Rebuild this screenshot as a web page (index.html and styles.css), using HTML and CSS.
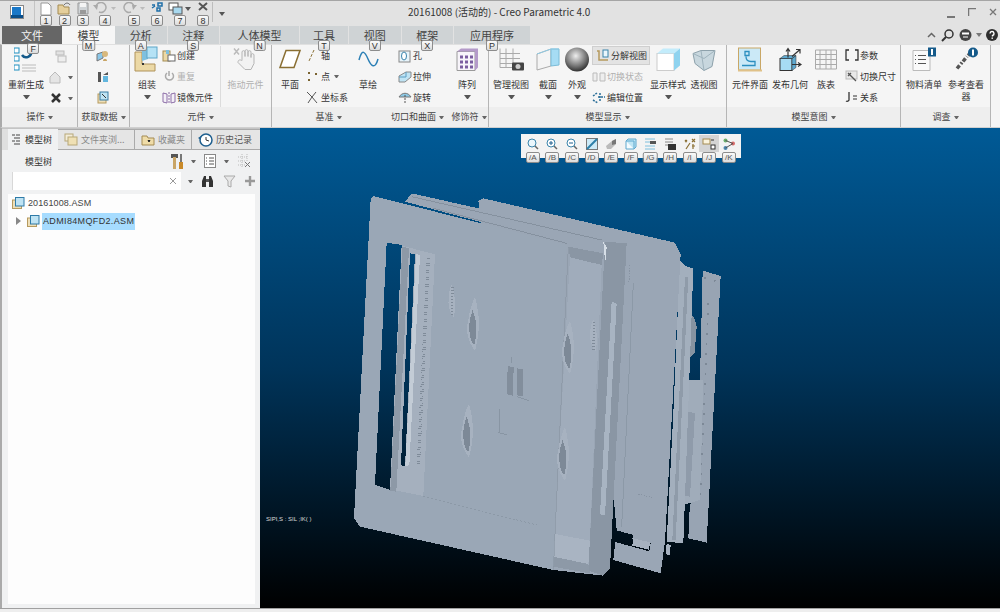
FILE: index.html
```html
<!DOCTYPE html>
<html lang="zh">
<head>
<meta charset="utf-8">
<title>20161008 (活动的) - Creo Parametric 4.0</title>
<link rel="stylesheet" href="styles.css">
</head>
<body>
<div class="app">
  <header class="titlebar">
    <div class="appicon"><svg width="12" height="12" viewBox="0 0 12 12"><rect x="1" y="1" width="9" height="9" fill="#1a78c8"/><rect x="0" y="9" width="12" height="3" fill="#0b4f8a"/></svg></div>
    <div class="qa">
      <div class="qb w18"><svg width="12" height="14" viewBox="0 0 12 14"><path d="M1 1h7l3 3v9H1z" fill="#fff" stroke="#999"/></svg><span class="kt">1</span></div>
      <div class="qb w19"><svg width="16" height="13" viewBox="0 0 16 13"><path d="M1 12V3h5l1 2h5v7z" fill="#e5cf9c" stroke="#a48b52"/><path d="M7 3c2-3 5-2 6 0" fill="none" stroke="#666"/></svg><span class="kt">2</span></div>
      <div class="qb w17"><svg width="12" height="13" viewBox="0 0 12 13"><path d="M1 1h10v11H1z" fill="#cfd3d6" stroke="#999"/><rect x="3" y="1" width="6" height="4" fill="#f4f4f4"/><rect x="3" y="8" width="6" height="4" fill="#999"/></svg><span class="kt">3</span></div>
      <div class="qb w28"><svg width="24" height="12" viewBox="0 0 24 12"><path d="M3 5a5 5 0 1 1 3 5" fill="none" stroke="#aaa" stroke-width="1.5"/><path d="M0 3l5 0-1 5z" fill="#aaa"/><path d="M18 5h5l-2.500 3z" fill="#bbb"/></svg><span class="kt">4</span></div>
      <div class="qb w30"><svg width="24" height="12" viewBox="0 0 24 12"><path d="M12 5a5 5 0 1 0-3 5" fill="none" stroke="#aaa" stroke-width="1.5"/><path d="M15 3l-5 0 1 5z" fill="#aaa"/><path d="M18 5h5l-2.500 3z" fill="#bbb"/></svg><span class="kt">5</span></div>
      <div class="qb w16"><svg width="12" height="10" viewBox="0 0 12 10"><path d="M1 6l3-2M1 3h3M7 1h4v3H7zM6 6h3v3H6z" fill="none" stroke="#1f6fa8" stroke-width="1.500"/></svg><span class="kt">6</span></div>
      <div class="qb w30"><svg width="24" height="14" viewBox="0 0 24 14"><rect x="1" y="1" width="9" height="7" fill="#fff" stroke="#555"/><rect x="5" y="5" width="9" height="7" fill="#a8d8ee" stroke="#555"/><path d="M17 5h6l-3 4z" fill="#555"/></svg><span class="kt">7</span></div>
      <div class="qb w16"><svg width="10" height="9" viewBox="0 0 10 9"><path d="M1 1l8 7M9 1L1 8" stroke="#555" stroke-width="2"/></svg><span class="kt">8</span></div>
    </div>
    <div class="qa-menu"><span class="bar"></span><span class="ar"></span></div>
    <div class="wintitle">20161008 (活动的) - Creo Parametric 4.0</div>
    <div class="winbtns">
      <svg width="8" height="10" viewBox="0 0 8 10"><rect y="8" width="8" height="2" fill="#777"/></svg>
      <svg width="8" height="8" viewBox="0 0 8 8"><path d="M.5 8V.5H8" fill="none" stroke="#777" stroke-width="1.500"/></svg>
      <svg width="8" height="8" viewBox="0 0 8 8"><path d="M1 1l6 6M7 1L1 7" stroke="#777" stroke-width="1.300"/></svg>
    </div>
  </header>

  <nav class="tabs">
    <div class="tab t-file">文件<span class="kt">F</span></div>
    <div class="tab t-on">模型<span class="kt">M</span></div>
    <div class="tab t52">分析<span class="kt">A</span></div>
    <div class="tab t52">注释<span class="kt">S</span></div>
    <div class="tab t80">人体模型<span class="kt">N</span></div>
    <div class="tab t49">工具<span class="kt">T</span></div>
    <div class="tab t52">视图<span class="kt">V</span></div>
    <div class="tab t52">框架<span class="kt">X</span></div>
    <div class="tab t76">应用程序<span class="kt">P</span></div>
    <div class="help">
      <svg width="9" height="6" viewBox="0 0 9 6"><path d="M1 5l3.500-3.500L8 5" fill="none" stroke="#666" stroke-width="1.500"/></svg>
      <svg width="13" height="13" viewBox="0 0 13 13"><circle cx="8" cy="5" r="4" fill="none" stroke="#333" stroke-width="1.500"/><path d="M5 8l-4 4" stroke="#333" stroke-width="2"/></svg>
      <svg width="13" height="12" viewBox="0 0 13 12"><circle cx="6.500" cy="6" r="6" fill="#444"/><rect x="3" y="3.500" width="7" height="2" fill="#fff"/><path d="M4 8h5" stroke="#fff"/></svg>
      <svg class="tight" width="6" height="4" viewBox="0 0 6 4"><path d="M0 0h6L3 4z" fill="#777"/></svg>
      <svg width="12" height="12" viewBox="0 0 12 12"><circle cx="6" cy="6" r="6" fill="#2e2e2e"/><path d="M4 4.500a2 2 0 1 1 2.500 2v1" fill="none" stroke="#fff" stroke-width="1.400"/><rect x="5.500" y="8.500" width="1.400" height="1.400" fill="#fff"/></svg>
    </div>
  </nav>

  <section class="ribbon">
    <div class="grp g75 bd">
      <div class="gb">
        <div class="big b44">
          <svg class="i" width="24" height="25" viewBox="0 0 24 25"><rect x="0" y="1" width="5" height="5" fill="#fff" stroke="#1f8fc0"/><rect x="0" y="9" width="5" height="5" fill="#fff" stroke="#1f8fc0"/><rect x="0" y="18" width="5" height="5" fill="#fff" stroke="#1f8fc0"/><path d="M8 8a5 5 0 0 0 9-4" fill="none" stroke="#155a8a" stroke-width="2.500"/><path d="M8 18h14M8 21h14M8 24h14" stroke="#bbb"/></svg>
          <span class="lb">重新生成</span><span class="ar"></span>
        </div>
        <div class="col c26 icons">
          <svg width="12" height="13" viewBox="0 0 12 13"><rect x="1" y="1" width="8" height="4" fill="#e2e2e2" stroke="#bbb"/><rect x="3" y="6" width="8" height="6" fill="#eee" stroke="#bbb"/></svg>
          <div class="row"><svg width="13" height="13" viewBox="0 0 13 13"><path d="M1 6l5-5 5 5v6H1z" fill="#e5e5e5" stroke="#bbb"/></svg><span class="ar ar-s"></span></div>
          <div class="row"><svg width="12" height="12" viewBox="0 0 12 12"><path d="M2 2l8 8M10 2l-8 8" stroke="#333" stroke-width="2.500"/></svg><span class="ar ar-s"></span></div>
        </div>
      </div>
      <div class="gl">操作<span class="ar ar-s"></span></div>
    </div>

    <div class="grp g51 bd">
      <div class="gb">
        <div class="col c51 icons">
          <svg width="13" height="12" viewBox="0 0 13 12"><path d="M1 4l6-2v6l-6 3z" fill="#8cc7e8" stroke="#777"/><circle cx="9" cy="4" r="3" fill="#d8b87c"/><path d="M7 11c0-3 4-3 4 0z" fill="#c9a566"/></svg>
          <svg width="12" height="12" viewBox="0 0 12 12"><rect x="1" y="1" width="3" height="10" fill="#555"/><path d="M6 4l5-3v3z" fill="#555"/><rect x="6" y="5" width="5" height="6" fill="#62b6de"/></svg>
          <svg width="12" height="13" viewBox="0 0 12 13"><rect x="1" y="3" width="8" height="9" fill="#eedfb8" stroke="#b69a5e"/><rect x="3" y="1" width="8" height="8" fill="#bfe3f3" stroke="#3a7da3"/><path d="M5 3l4 4" stroke="#333"/></svg>
        </div>
      </div>
      <div class="gl">获取数据<span class="ar ar-s"></span></div>
    </div>

    <div class="grp g141 bd">
      <div class="gb">
        <div class="big b30">
          <svg class="i" width="26" height="27" viewBox="0 0 26 27"><path d="M1 6h7v12h13v7H1z" fill="#ecd9a6" stroke="#b0935a"/><path d="M8 3l6-2v12l-6 2z" fill="#7fc0de"/><rect x="13" y="1" width="10" height="11" fill="#b5e2f5" stroke="#5ea6c8"/><rect x="8" y="17" width="2" height="2" fill="#333"/></svg>
          <span class="lb">组装</span><span class="ar"></span>
        </div>
        <div class="col c58 start">
          <div class="sm"><svg width="14" height="13" viewBox="0 0 14 13"><rect x="1" y="2" width="7" height="10" fill="#ecd9a6" stroke="#a48b52"/><rect x="6" y="6" width="7" height="6" fill="#fff" stroke="#666"/><path d="M4 1h3v4H4z" fill="#7fc0de"/></svg>创建</div>
          <div class="sm dim"><svg width="14" height="13" viewBox="0 0 14 13"><path d="M5 3a4 4 0 1 0 5 0M7 1v5" fill="none" stroke="#aaa" stroke-width="1.500"/></svg>重复</div>
          <div class="sm"><svg width="14" height="13" viewBox="0 0 14 13"><path d="M1 2l4 1v9l-4-1zM13 2l-4 1v9l4-1z" fill="#f4f0f7" stroke="#8d6fa8"/><path d="M7 1v11" stroke="#8d6fa8" stroke-dasharray="2 1"/></svg>镜像元件</div>
        </div>
        <div class="big b48 sep dim">
          <svg class="i" width="26" height="24" viewBox="0 0 26 24"><path d="M1 1l5 6M6 1L1 7" stroke="#bbb" stroke-width="1.500"/><path d="M9 12V4a2 2 0 0 1 3 0v5-6a2 2 0 0 1 3 0v6-5a2 2 0 0 1 3 0v6-3a2 2 0 0 1 3 0v9l-3 6H12l-7-7c0-3 2-3 4-2z" fill="#f2f2f2" stroke="#b5b5b5"/></svg>
          <span class="lb">拖动元件</span>
        </div>
      </div>
      <div class="gl">元件<span class="ar ar-s"></span></div>
    </div>

    <div class="grp g113">
      <div class="gb">
        <div class="big b32">
          <svg class="i" width="22" height="20" viewBox="0 0 22 20"><path d="M7 1h14l-6 17H1z" fill="#fff" stroke="#8a6f33" stroke-width="1.500"/></svg>
          <span class="lb">平面</span>
        </div>
        <div class="col c48 start">
          <div class="sm"><svg width="14" height="13" viewBox="0 0 14 13"><path d="M8 1L3 12" stroke="#8a6f33" stroke-dasharray="3 1.500"/></svg>轴</div>
          <div class="sm"><svg width="14" height="13" viewBox="0 0 14 13"><path d="M2 3l3 0M2 10l3 0M9 4h3" stroke="#7a6330" stroke-width="2" stroke-dasharray="2 1"/></svg>点<span class="ar ar-s"></span></div>
          <div class="sm"><svg width="14" height="13" viewBox="0 0 14 13"><path d="M1 1l5 5-4 6M6 6l4-5M6 6l5 6" fill="none" stroke="#555"/></svg>坐标系</div>
        </div>
        <div class="big b30">
          <svg class="i" width="21" height="17" viewBox="0 0 21 17"><path d="M1 9C4-3 7 1 10 8s7 11 10 0" fill="none" stroke="#2b7fb5" stroke-width="1.500"/></svg>
          <span class="lb">草绘</span>
        </div>
      </div>
      <div class="gl">基准<span class="ar ar-s"></span></div>
    </div>

    <div class="grp g64">
      <div class="gb">
        <div class="col c64 start">
          <div class="sm"><svg width="14" height="14" viewBox="0 0 14 14"><rect x="1" y="2" width="11" height="11" fill="#e8f4fa" stroke="#888"/><ellipse cx="6" cy="7" rx="2.500" ry="4" fill="#fff" stroke="#3a84ab"/></svg>孔</div>
          <div class="sm"><svg width="14" height="14" viewBox="0 0 14 14"><path d="M1 6l7-4h5v5l-6 5H1z" fill="#bfe3f3" stroke="#888"/><path d="M8 2v5l-7 0" fill="none" stroke="#5a9dc2"/></svg>拉伸</div>
          <div class="sm"><svg width="14" height="14" viewBox="0 0 14 14"><path d="M1 6c3-5 9-5 12 0z" fill="#8cc9e6" stroke="#777"/><path d="M7 4v9" stroke="#555" stroke-dasharray="2 1"/></svg>旋转</div>
        </div>
      </div>
      <div class="gl">切口和曲面<span class="ar ar-s"></span></div>
    </div>

    <div class="grp g39 bd">
      <div class="gb">
        <div class="big b30">
          <svg class="i" width="23" height="24" viewBox="0 0 23 24"><path d="M1 4h18v19H1z" fill="#f7f4fa" stroke="#9a9a9a"/><path d="M1 4l4-3h17l-3 3zM19 4l3-3v19l-3 3z" fill="#b49ac9"/><path d="M4 8h3v3H4zM9 8h3v3H9zM14 8h3v3h-3zM4 13h3v3H4zM9 13h3v3H9zM14 13h3v3h-3zM4 18h3v3H4zM9 18h3v3H9zM14 18h3v3h-3z" fill="#7b5da0"/></svg>
          <span class="lb">阵列</span><span class="ar"></span>
        </div>
      </div>
      <div class="gl">修饰符<span class="ar ar-s"></span></div>
    </div>

    <div class="grp g238 bd">
      <div class="gb">
        <div class="big b40">
          <svg class="i" width="25" height="24" viewBox="0 0 25 24"><path d="M1 1v19h19M1 6h20M1 11h20M1 16h20M7 1v19M14 1v19" fill="none" stroke="#aaa"/><rect x="13" y="15" width="12" height="8" rx="1" fill="#444"/><circle cx="19" cy="19" r="2.500" fill="#ccc"/></svg>
          <span class="lb">管理视图</span><span class="ar"></span>
        </div>
        <div class="big b34">
          <svg class="i" width="24" height="23" viewBox="0 0 24 23"><path d="M1 6l14-5v17L1 22z" fill="#f4f4f4" stroke="#aaa"/><path d="M15 1h8v16l-8 1z" fill="#a6dcf4" stroke="#7bbcd8"/><path d="M1 6l14-5h8" fill="none" stroke="#8fcbe5"/></svg>
          <span class="lb">截面</span><span class="ar"></span>
        </div>
        <div class="big b24">
          <svg class="i" width="24" height="24" viewBox="0 0 24 24"><defs><radialGradient id="ball" cx=".45" cy=".35" r=".7"><stop offset="0" stop-color="#eee"/><stop offset=".6" stop-color="#777"/><stop offset="1" stop-color="#222"/></radialGradient></defs><circle cx="12" cy="12" r="12" fill="url(#ball)"/></svg>
          <span class="lb">外观</span><span class="ar"></span>
        </div>
        <div class="col c60 start mid">
          <div class="sm on"><svg width="14" height="13" viewBox="0 0 14 13"><path d="M1 2h2v9h9" fill="none" stroke="#b69a5e" stroke-width="1.500"/><rect x="7" y="1" width="5" height="7" fill="#eaf6fc" stroke="#3a84ab"/></svg>分解视图</div>
          <div class="sm dim"><svg width="14" height="13" viewBox="0 0 14 13"><path d="M1 3h4v8H1zM8 3h5v8H8z" fill="#eee" stroke="#bbb"/></svg>切换状态</div>
          <div class="sm"><svg width="14" height="13" viewBox="0 0 14 13"><path d="M1 5l4-3M1 9l5 3M8 2v9M6 6h7" stroke="#2b6f99" stroke-width="1.500" stroke-dasharray="2 1" fill="none"/></svg>编辑位置</div>
        </div>
        <div class="big b38">
          <svg class="i" width="25" height="24" viewBox="0 0 25 24"><rect x="1" y="6" width="17" height="17" fill="#fff" stroke="#ccc"/><path d="M1 6l6-5h17l-6 5z" fill="#c3ecfb"/><path d="M18 6l6-5v17l-6 5z" fill="#8fd3ef"/></svg>
          <span class="lb">显示样式</span><span class="ar"></span>
        </div>
        <div class="big b34">
          <svg class="i" width="24" height="24" viewBox="0 0 24 24"><path d="M1 6l8-3h14l-3 16-8 4-9-7z" fill="#c8d7de" stroke="#8da1ab"/><path d="M9 3l3 20M1 6l11 5 11-8" fill="none" stroke="#9fb3bd"/></svg>
          <span class="lb">透视图</span>
        </div>
      </div>
      <div class="gl">模型显示<span class="ar ar-s"></span></div>
    </div>

    <div class="grp g174 bd">
      <div class="gb">
        <div class="big b42">
          <svg class="i" width="24" height="24" viewBox="0 0 24 24"><rect x=".5" y=".5" width="22" height="22" fill="#cbe9f7" stroke="#c9a766"/><rect x="0" y="22" width="24" height="2" fill="#e0c188"/><path d="M7 4h4v4H7zM8 9c0 4 2 5 5 5h4v4h-4M4 18h13" fill="none" stroke="#2c8fbf" stroke-width="1.300"/></svg>
          <span class="lb">元件界面</span>
        </div>
        <div class="big b38">
          <svg class="i" width="24" height="24" viewBox="0 0 24 24"><rect x="2" y="11" width="12" height="12" fill="#a6dcf4" stroke="#333"/><path d="M2 11l4-3h12l-4 3zM14 11l4-3v12l-4 3z" fill="#5ea8ce" stroke="#333" stroke-width=".5"/><path d="M10 10V2M8 4l2-3 2 3M14 9l8-7M18 2h4v4M14 17h9M20 15l3 2-3 2" fill="none" stroke="#333" stroke-width="1.200"/></svg>
          <span class="lb">发布几何</span>
        </div>
        <div class="big b34">
          <svg class="i" width="22" height="20" viewBox="0 0 22 20"><path d="M.5.500h21v19H.5zM.5 5h21M.5 10h21M.5 15h21M5 .5v19M11 .5v19M16 .5v19" fill="none" stroke="#aaa"/></svg>
          <span class="lb">族表</span>
        </div>
        <div class="col c60 start sh2">
          <div class="sm"><svg width="14" height="13" viewBox="0 0 14 13"><path d="M4 1H1v10h3M10 1h3v10h-3" fill="none" stroke="#333" stroke-width="1.300"/></svg>参数</div>
          <div class="sm"><svg width="14" height="13" viewBox="0 0 14 13"><rect x="1" y="1" width="11" height="8" fill="#e8e8e8" stroke="#bbb"/><path d="M3 3l8 8M6 3l-3 3" stroke="#555" stroke-width="1.300"/></svg>切换尺寸</div>
          <div class="sm"><svg width="14" height="13" viewBox="0 0 14 13"><path d="M4 1v8a2 2 0 0 1-3 1" fill="none" stroke="#333" stroke-width="1.300"/><path d="M8 5h4M8 8h4" stroke="#333"/></svg>关系</div>
        </div>
      </div>
      <div class="gl">模型意图<span class="ar ar-s"></span></div>
    </div>

    <div class="grp g90 bd">
      <div class="gb">
        <div class="big b42">
          <svg class="i" width="24" height="24" viewBox="0 0 24 24"><path d="M1 3h15l2 2v18H1z" fill="#fafafa" stroke="#bbb"/><path d="M3 8h1M6 8h8M3 12h1M6 12h8M3 16h1M6 16h8" stroke="#555"/><rect x="16" y="0" width="8" height="9" fill="#155a8a"/><rect x="19" y="1.500" width="2" height="6" fill="#fff"/></svg>
          <span class="lb">物料清单</span>
        </div>
        <div class="big b42 two">
          <svg class="i" width="24" height="24" viewBox="0 0 24 24"><path d="M3 21l5-6M9 14l4-5M14 8l3-3" stroke="#555" stroke-width="3.500" stroke-dasharray="4 2" fill="none"/><circle cx="19" cy="5" r="5" fill="#155a8a"/><rect x="18" y="2" width="2" height="6" fill="#fff"/></svg>
          <span class="lb">参考查看器</span>
        </div>
      </div>
      <div class="gl">调查<span class="ar ar-s"></span></div>
    </div>
  </section>

  <main class="work">
    <aside class="side">
      <div class="stabs">
        <div class="stab s-on"><svg width="8" height="11" viewBox="0 0 8 11"><path d="M0 1h3M4 1h4M2 4h6M0 7h3M4 7h4M2 10h6" stroke="#444"/></svg>模型树</div>
        <div class="stab s77"><svg width="14" height="13" viewBox="0 0 14 13"><rect x="1" y="1" width="8" height="7" fill="#f2ecd9" stroke="#b8a878"/><rect x="4" y="4" width="9" height="8" fill="#efe0b4" stroke="#b8a878"/></svg>文件夹浏...</div>
        <div class="stab s57"><svg width="14" height="13" viewBox="0 0 14 13"><path d="M1 12V3h5l1 2h6v7z" fill="#efdca8" stroke="#a48b52"/><path d="M7 7l1 1 1-1-1 2z" stroke="#222"/></svg>收藏夹</div>
        <div class="stab s68"><svg width="15" height="14" viewBox="0 0 15 14"><circle cx="8" cy="7" r="6" fill="#fff" stroke="#1f5f8e" stroke-width="1.500"/><path d="M8 4v3l3 1" fill="none" stroke="#333"/><path d="M0 5l3-2v4z" fill="#1f5f8e"/></svg>历史记录</div>
      </div>
      <div class="stools">
        <span class="st-title">模型树</span>
        <span class="st-right">
          <svg width="12" height="15" viewBox="0 0 12 15"><rect x="0" y="0" width="7" height="4" fill="#555"/><rect x="2" y="3" width="3" height="12" fill="#c9a566"/><rect x="9" y="0" width="2" height="8" fill="#777"/><rect x="8" y="8" width="4" height="7" fill="#c98a2a"/></svg>
          <span class="ar ar-s"></span>
          <svg width="12" height="14" viewBox="0 0 12 14"><rect x=".5" y=".5" width="11" height="13" fill="#fff" stroke="#888"/><path d="M2 4h1M5 4h5M2 7h1M5 7h5M2 10h1M5 10h5" stroke="#555"/></svg>
          <span class="ar ar-s"></span>
          <svg width="14" height="14" viewBox="0 0 14 14"><path d="M1 3h10M1 7h7M1 11h7M5 0v14M10 0v8" stroke="#bbb" stroke-dasharray="1 1"/><path d="M8 8l5 5M13 8l-5 5" stroke="#777"/></svg>
        </span>
      </div>
      <div class="ssearch">
        <div class="sinput"><svg width="6" height="6" viewBox="0 0 6 6"><path d="M0 0l6 6M6 0L0 6" stroke="#999"/></svg></div>
        <span class="ar ar-s"></span>
        <svg width="13" height="13" viewBox="0 0 13 13"><path d="M1 12V6l2-5h2v11zM12 12V6l-2-5H8v11z" fill="#333"/><rect x="5" y="4" width="3" height="3" fill="#555"/></svg>
        <svg width="13" height="13" viewBox="0 0 13 13"><path d="M1 1h11L8 6v6L5 11V6z" fill="#e8e8e8" stroke="#aaa"/></svg>
        <svg width="10" height="10" viewBox="0 0 10 10"><path d="M5 0v10M0 5h10" stroke="#999" stroke-width="2.400"/></svg>
      </div>
      <div class="tree">
        <div class="node"><svg width="13" height="12" viewBox="0 0 13 12"><rect x="0.500" y="3" width="9" height="8.500" fill="#eedfb8" stroke="#b69a5e"/><rect x="3.500" y=".5" width="8.500" height="8.500" fill="#bfe3f3" stroke="#2f7ba8"/></svg>20161008.ASM</div>
        <div class="node child"><span class="tw"></span><svg width="13" height="12" viewBox="0 0 13 12"><rect x="0.500" y="3" width="9" height="8.500" fill="#eedfb8" stroke="#b69a5e"/><rect x="3.500" y=".5" width="8.500" height="8.500" fill="#bfe3f3" stroke="#2f7ba8"/></svg><span class="sel">ADMI84MQFD2.ASM</span></div>
      </div>
    </aside>

    <div class="canvas">
      <svg class="model" viewBox="0 0 740 480">
        <defs>
          <linearGradient id="bg" gradientUnits="userSpaceOnUse" x1="0" y1="-156" x2="0" y2="1284"><stop offset="0" stop-color="#005a96"/><stop offset=".5" stop-color="#00345a"/><stop offset="1" stop-color="#000"/></linearGradient>
          <g id="lens">
            <path d="M405 352Q428 430 405 512Q372 470 385 420Q390 380 405 352z" fill="#a7b2c0"/>
            <path d="M398 390Q383 430 390 470Q396 490 403 496Q418 440 398 390z" fill="#7d8997"/>
          </g>
          <g id="vent">
            <path d="M335 315Q352 360 342 412Q322 390 326 350Q328 325 335 315z" fill="#a7b2c0"/>
            <path d="M338 322l-3 85" stroke="#7f8b99" stroke-width="7" stroke-dasharray="3 6" fill="none"/>
          </g>
        </defs>
        <g transform="translate(80 52) scale(.33333)" shape-rendering="crispEdges">
          <path d="M1088 272l54 16-42 800-55-13 3-75 12-100 20-300z" fill="#98a4b3"/>
          <path d="M1105 370l-25 600M1125 300l-5 18M1095 290l-3 20" stroke="#7d8997" stroke-width="5" stroke-dasharray="6 24" fill="none"/>
          <path d="M1040 405l22 5 8 30-6 80-24 20z" fill="#8693a1"/>
          <path d="M1040 600l50 0-10 360-50 15z" fill="#a0acba"/>
          <path d="M1045 695l20 5-15 250-20-5z" fill="#8f9baa"/>
          <path d="M1020 240l15 18 25 7-30 825-50-5 20-385z" fill="#a3afbd"/>
          <path d="M1040 290l-38 790" stroke="#8f9ba9" stroke-width="10" fill="none"/>
          <path d="M415 62l15-7 575 133 17 34-47 863-13 95-142-40 10-90L760 300 430 200z" fill="#9aa6b5"/>
          <path d="M825 1050l55 15-3 12 55 12-4 25-110-30z" fill="url(#bg)"/>
          <path d="M880 1075l50 12-3 22-50-12zM980 1090l12 6-3 30-12-4z" fill="#a6b1bf"/>
          <path d="M880 310l-35 730" stroke="#8693a1" stroke-width="2" fill="none"/>
          <path d="M870 255l-3 50M895 942l40 10" stroke="#808c9a" stroke-width="2" stroke-dasharray="4 4" fill="none"/>
          <path d="M195 65l20-25 645 145-50 980-20 22-150-17 40-975z" fill="#9aa6b5"/>
          <path d="M215 50l570 130M280 85l400 105" stroke="#85919f" stroke-width="3" fill="none"/>
          <path d="M795 185l65 5-50 975-20 22-45-15z" fill="#8a96a4"/>
          <path d="M790 185l10 16-3 40-4-20z" fill="#d6dee6"/>
          <path d="M685 200l105 20-5 35-95-23z" fill="#8a96a4"/>
          <path d="M690 232l95 23-40 925-105-50z" fill="#a0acbb"/>
          <path d="M815 365l15 6-35 634-15-2z" fill="#a8b4c2"/>
          <path d="M645 1062l105 20-5 70-105-22z" fill="#a9b4c2"/>
          <path d="M640 1130l105 22 5 28-110-20z" fill="#8d99a7"/>
          <path d="M100 48l580 147-40 975-580-130-18-25 50-957z" fill="#9aa7b6"/>
          <path d="M140 188l45 7-35 735-45-15z" fill="url(#bg)"/>
          <path d="M185 197l100 26-35 725-100-20z" fill="#a5b0be"/>
          <path d="M187 200l20 5-38 730-18-3z" fill="#8d99a7"/>
          <path d="M210 220l15 3-30 637-12-5z" fill="url(#bg)"/>
          <path d="M228 222l12 4-32 630-12 2z" fill="#c3ccd6"/>
          <path d="M265 235l-30 620" stroke="#7f8b99" stroke-width="10" stroke-dasharray="2 5" fill="none"/>
          <path d="M685 200l-45 970" stroke="#8a96a4" stroke-width="2" fill="none"/>
          <path d="M250 950l340 85" stroke="#7f8b99" stroke-width="1.500" stroke-dasharray="6 6" fill="none"/>
          <use href="#vent"/>
          <use href="#vent" transform="translate(425 103)"/>
          <use href="#lens"/>
          <use href="#lens" transform="translate(285 70)"/>
          <use href="#lens" transform="translate(-18 320)"/>
          <use href="#lens" transform="translate(270 390)"/>
          <path d="M503 558l18 4-2 85-18-4z" fill="#828e9c"/>
          <path d="M532 565l18 4-2 80-18-3z" fill="#828e9c"/>
          <path d="M530 650l38 12M480 688l-3 70 24 6M513 530l3 20" stroke="#7f8b99" stroke-width="2" fill="none"/>
        </g>
      </svg>
      <div class="vbar">
        <div class="vb"><svg width="12" height="12" viewBox="0 0 12 12"><circle cx="5" cy="5" r="4" fill="#eaf6fc" stroke="#3a84ab"/><path d="M8 8l3 3" stroke="#666" stroke-width="1.500"/></svg><span class="kt">/A</span></div>
        <div class="vb"><svg width="12" height="12" viewBox="0 0 12 12"><circle cx="5" cy="5" r="4" fill="#fff" stroke="#3a84ab"/><path d="M3 5h4M5 3v4" stroke="#1f5f8e"/><path d="M8 8l3 3" stroke="#666" stroke-width="1.500"/></svg><span class="kt">/B</span></div>
        <div class="vb"><svg width="12" height="12" viewBox="0 0 12 12"><circle cx="5" cy="5" r="4" fill="#fff" stroke="#3a84ab"/><path d="M3 5h4" stroke="#1f5f8e"/><path d="M8 8l3 3" stroke="#666" stroke-width="1.500"/></svg><span class="kt">/C</span></div>
        <div class="vb"><svg width="12" height="12" viewBox="0 0 12 12"><rect x=".5" y=".5" width="11" height="11" fill="#cdeaf7" stroke="#777"/><path d="M1 11L11 1" stroke="#2c7fa8" stroke-width="2"/></svg><span class="kt">/D</span></div>
        <div class="vb"><svg width="12" height="12" viewBox="0 0 12 12"><path d="M1 8l6-5 4-2v5l-5 5H2z" fill="#bbb"/><path d="M7 3l4-2v5l-4 1z" fill="#777"/></svg><span class="kt">/E</span></div>
        <div class="vb"><svg width="12" height="12" viewBox="0 0 12 12"><path d="M1 3h8v8H1z" fill="#f4fbfe" stroke="#5ea8ce"/><path d="M1 3l2-2h8v8l-2 2" fill="#bfe6f5" stroke="#5ea8ce"/><path d="M1 3h8v8" fill="none" stroke="#5ea8ce"/></svg><span class="kt">/F</span></div>
        <div class="vb"><svg width="12" height="12" viewBox="0 0 12 12"><path d="M1 1h10M1 4h10M1 8h10M1 11h10" stroke="#7fc0de"/><rect x="6" y="3" width="6" height="3" fill="#555"/></svg><span class="kt">/G</span></div>
        <div class="vb"><svg width="12" height="12" viewBox="0 0 12 12"><path d="M1 1h8M1 4h8M1 7h8" stroke="#888"/><rect x="4" y="6" width="8" height="6" fill="#333"/></svg><span class="kt">/H</span></div>
        <div class="vb"><svg width="12" height="12" viewBox="0 0 12 12"><path d="M1 2l2 2M3 2L1 4M8 1l3 3M11 1L8 4M2 11l4-6M8 8h3M9 6v5" stroke="#8a6f33" stroke-width="1.200"/></svg><span class="kt">/I</span></div>
        <div class="vb vb-on"><svg width="14" height="12" viewBox="0 0 14 12"><rect x="1" y="1" width="7" height="5" fill="#faf3dd" stroke="#a48b52"/><rect x="9" y="7" width="4" height="4" fill="#fff" stroke="#333"/><path d="M9 2h3" stroke="#333"/></svg><span class="kt">/J</span></div>
        <div class="vb"><svg width="12" height="12" viewBox="0 0 12 12"><circle cx="2.500" cy="2.500" r="2" fill="#6caf6c"/><circle cx="10" cy="5.500" r="2" fill="#d76a6a"/><circle cx="2.500" cy="10" r="2" fill="#4d86ad"/><path d="M2.500 2.500L10 5.500 2.500 10" fill="none" stroke="#555"/></svg><span class="kt">/K</span></div>
      </div>
      <span class="spin">SIPI,S : SIL ;IK( )</span>
    </div>
  </main>
  <footer class="status"></footer>
</div>
</body>
</html>
```

FILE: styles.css
```css
* { box-sizing: border-box; }
html, body { margin: 0; padding: 0; }
body { width: 1000px; height: 612px; overflow: hidden; font-family: "Noto Sans CJK SC", "Liberation Sans", sans-serif; color: #333; background: #e2e2e2; }
.app { display: flex; flex-direction: column; width: 1000px; height: 612px; border-top: 1px solid #a5a5a5; }
svg { display: block; flex: none; }

.titlebar { position: relative; display: flex; align-items: flex-start; height: 25px; padding-left: 11px; background: #e2e2e2; }
.appicon { width: 12px; height: 12px; margin-top: 5px; outline: 1px solid #888; background: #fff; }
.qa { display: flex; margin-left: 11px; height: 25px; padding-left: 2px; border-left: 1px solid #c4c4c4; }
.qb { position: relative; display: flex; justify-content: center; padding-top: 1px; height: 25px; }
.w16 { width: 16px; } .w17 { width: 17px; } .w18 { width: 18px; } .w19 { width: 19px; } .w28 { width: 28px; } .w30 { width: 30px; }
.qa-menu { display: flex; align-items: flex-start; margin-left: 1px; }
.qa-menu .bar { width: 1px; height: 20px; background: #bdbdbd; margin-top: 1px; }
.qa-menu .ar { margin: 11px 0 0 6px; width: 6px; height: 4px; border-width: 4px 3px 0; }
.wintitle { position: absolute; left: 408px; top: 4px; font-size: 10px; line-height: 14px; color: #333; white-space: nowrap; }
.winbtns { margin-left: auto; display: flex; gap: 13px; align-items: flex-start; padding: 7px 3px 0 0; }

.kt { position: absolute; top: 14px; left: 50%; transform: translateX(-50%); min-width: 12px; height: 11px; padding: 0 2px; font: 9px/10px "Liberation Sans", sans-serif; text-align: center; color: #333; background: linear-gradient(#fafafa, #dcdcdc); border: 1px solid #8c8c8c; border-radius: 2px; z-index: 5; }

.tabs { display: flex; height: 18px; padding-left: 2px; background: #e2e2e2; }
.tab { position: relative; display: flex; justify-content: center; align-items: center; width: 52px; height: 18px; margin-right: 1px; font-size: 11px; line-height: 18px; color: #444; background: #cfd3d5; }
.t-file { width: 60px; margin: 0; color: #f2f2f2; background: #666; }
.t-on { width: 53px; margin: 0; background: #f6f6f6; }
.t52 { width: 51.500px; }
.t80 { width: 79px; } .t49 { width: 48px; } .t76 { width: 76px; }
.tab .kt { top: 14px; }
.t-file .kt { left: 52%; top: 17px; }
.help { margin-left: auto; display: flex; align-items: center; gap: 5px; padding: 0 2px 0 0; }
.help .tight { margin: 0 -1px; }

.ribbon { display: flex; height: 84px; background: #f5f5f5; border-top: 1px solid #e0e0e0; border-left: 2px solid #aaa; border-bottom: 1px solid #cfcfcf; }
.grp { display: flex; flex-direction: column; flex: none; }
.bd { border-right: 1px solid #b5b5b5; }
.g75 { width: 76px; } .g51 { width: 52px; } .g141 { width: 142px; } .g113 { width: 113px; } .g64 { width: 65px; } .g39 { width: 39px; } .g238 { width: 238px; } .g174 { width: 174px; } .g90 { width: 90px; }
.gb { display: flex; flex: 1; padding: 1px 2px 0; }
.gl { display: flex; justify-content: center; align-items: center; gap: 3px; height: 20px; font-size: 9px; line-height: 12px; color: #444; background: #eeeeee; white-space: nowrap; }
.big { display: flex; flex-direction: column; align-items: center; flex: none; font-size: 9px; line-height: 12px; color: #333; }
.big .i { height: 27px; margin-bottom: 6px; align-self: center; }
.big .lb { display: block; height: 12px; width: 100%; text-align: center; }
.big .ar { margin-top: 4px; }
.two .lb { height: 24px; padding: 0 2px; }
.b24 { width: 24px; } .b30 { width: 30px; } .b32 { width: 32px; } .b34 { width: 34px; } .b38 { width: 38px; } .b40 { width: 40px; } .b42 { width: 42px; } .b44 { width: 44px; } .b48 { width: 48px; }
.sep { border-left: 1px solid #dcdcdc; padding-left: 2px; }
.dim { color: #b0b0b0; }
.col { display: flex; flex-direction: column; align-items: center; justify-content: space-between; height: 61px; }
.icons { padding: 4px 0 3px; }
.start { align-items: flex-start; }
.mid { margin-left: 3px; }
.sh2 { margin-left: 2px; }
.c26 { width: 26px; } .c51 { width: 45px; } .c58 { width: 58px; } .c48 { width: 48px; } .c64 { width: 62px; padding-left: 11px; } .c60 { width: 60px; }
.mid.c60 { width: 58px; margin-right: -1px; }
.row { display: flex; align-items: center; gap: 6px; }
.sm { display: flex; align-items: center; gap: 1px; height: 19px; font-size: 9px; line-height: 9px; white-space: nowrap; }
.on { width: 58px; padding-left: 3px; background: #e3e3e3; border: 1px solid #cfcfcf; }

.ar { display: block; width: 7px; height: 4px; border-style: solid; border-width: 4px 3.500px 0; border-color: #555 transparent transparent; flex: none; }
.ar-s { width: 5px; height: 3px; border-width: 3px 2.500px 0; border-top-color: #666; }
.sm .ar-s { margin-left: 3px; }

.work { display: flex; flex: 1; min-height: 0; border-left: 2px solid #aaa; }
.side { display: flex; flex-direction: column; width: 258px; padding: 0 5px 4px 0; background: #f0f1f2; }
.stabs { display: flex; height: 22px; padding-left: 6px; margin-right: -5px; background: #dfdfdf; border-top: 1px solid #c4c4c4; }
.stab { display: flex; align-items: center; gap: 3px; height: 21px; padding-left: 6px; font-size: 9px; color: #888; border: 1px solid #aaa; border-left: 0; background: #e5e5e5; white-space: nowrap; }
.s-on { width: 50px; padding-left: 4px; gap: 5px; color: #333; background: #f0f1f2; border: 0; }
.s77 { width: 77px; } .s57 { width: 57px; } .s68 { width: 68px; border-right: 0; color: #555; }
.stools { display: flex; justify-content: space-between; align-items: center; height: 22px; padding: 0 3px 0 23px; font-size: 9px; }
.st-right { display: flex; align-items: center; gap: 8px; margin-right: 1px; }
.ssearch { display: flex; align-items: center; gap: 9px; height: 18px; padding-left: 10px; margin-bottom: 4px; }
.sinput { display: flex; justify-content: flex-end; align-items: center; width: 171px; height: 18px; padding-right: 5px; margin-right: -2px; background: #fff; border-left: 1px solid #d8d8d8; }
.ssearch .ar-s { margin-right: -1px; }
.tree { flex: 1; margin-left: 6px; background: #fdfdfd; font: 9px/17px "Liberation Sans", sans-serif; color: #444; letter-spacing: .1px; }
.node { display: flex; align-items: center; gap: 3px; height: 18px; padding-left: 4px; }
.child { padding-left: 8px; }
.tw { width: 0; height: 0; margin-right: 3px; border-style: solid; border-width: 4px 0 4px 5px; border-color: transparent transparent transparent #888; }
.sel { padding: 0 1px; margin-left: -1px; background: #a6dcff; color: #333; letter-spacing: .35px; }

.canvas { position: relative; flex: 1; background: linear-gradient(#005a96, #00345a 50%, #000 100%); overflow: hidden; }
.model { position: absolute; left: 0; top: 0; width: 740px; height: 480px; }
.vbar { position: absolute; left: 261px; top: 6px; display: flex; height: 24px; padding: 0 2px; background: #f3f3f3; }
.vb { position: relative; display: flex; justify-content: center; width: 19.600px; height: 19px; padding-top: 4px; }
.vb-on { background: #d4d4d4; height: 17px; margin-top: 1px; padding-top: 3px; }
.vb .kt { top: 18px; min-width: 14px; font-size: 8px; color: #555; }
.vb-on .kt { top: 17px; }
.spin { position: absolute; left: 6px; top: 387px; font: 6px/8px "Liberation Sans", sans-serif; color: #dcdcdc; white-space: nowrap; }
.status { height: 4px; background: #eeeeee; border-top: 1px solid #a0a0a0; }
```
